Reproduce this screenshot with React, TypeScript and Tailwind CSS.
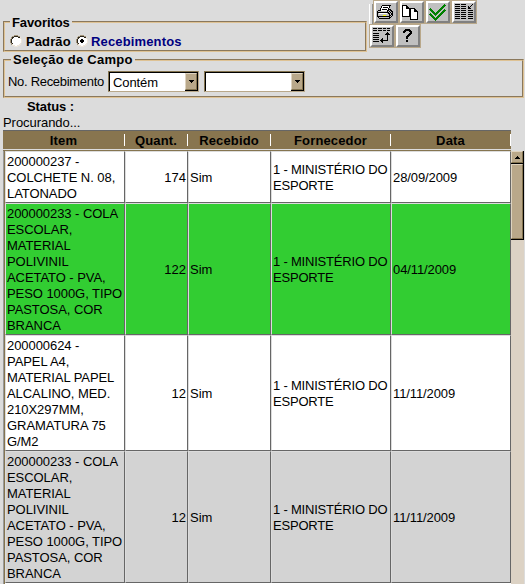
import React from "react";

const columns = [
  { label: "Item", width: "w-[122px]" },
  { label: "Quant.", width: "w-[63px]" },
  { label: "Recebido", width: "w-[83px]" },
  { label: "Fornecedor", width: "w-[120px]" },
  { label: "Data", width: "w-[120px]" },
];

const cola = ["200000233 - COLA", "ESCOLAR,", "MATERIAL", "POLIVINIL", "ACETATO - PVA,", "PESO 1000G, TIPO", "PASTOSA, COR", "BRANCA"];

const rows = [
  { item: ["200000237 -", "COLCHETE N. 08,", "LATONADO"], qty: "174", date: "28/09/2009", h: "h-[52px]", bg: "bg-white" },
  { item: cola, qty: "122", date: "04/11/2009", h: "h-[132px]", bg: "bg-[#32cd32]" },
  { item: ["200000624 -", "PAPEL A4,", "MATERIAL PAPEL", "ALCALINO, MED.", "210X297MM,", "GRAMATURA 75", "G/M2"], qty: "12", date: "11/11/2009", h: "h-[116px]", bg: "bg-white" },
  { item: cola, qty: "12", date: "11/11/2009", h: "h-[132px]", bg: "bg-[#d3d3d3]" },
];

const printer = [
  ".....#########..",
  "....#wwwwwww#...",
  "....#w#####w#...",
  "...#wwwwwww#....",
  "...#w#####w###..",
  ".###wwwwww##g##.",
  "#ggggggggg#g#g##",
  "############g#g#",
  "#gwwwwwwwwg##g##",
  "#ggggggggggg#g##",
  "#gggggyyyggg##g#",
  "#############g#.",
  ".#gggggggggg##..",
  "..###########...",
];

const question = [
  "..#####..",
  ".#######.",
  "###...###",
  "##.....##",
  "......###",
  ".....###.",
  "....###..",
  "...###...",
  "...##....",
  "...##....",
  ".........",
  "...##....",
  "...##....",
];

const radio = [
  "....dddd....",
  "..ddkkkkdd..",
  ".dkkwwwwkkl.",
  ".dkwwwwwwwl.",
  "dkwwwwwwwwwl",
  "dkwwwwwwwwwl",
  "dkwwwwwwwwwl",
  "dkwwwwwwwwwl",
  ".dkwwwwwwwl.",
  ".dlwwwwwwll.",
  "..lllwwlll..",
  "....llll....",
];

const palette: Record<string, string> = {
  "#": "#000",
  w: "#fff",
  g: "#c0c0c0",
  y: "#ffff00",
  d: "#a3957a",
  k: "#2a261e",
  l: "#eee6da",
};

function Pixels({ map, x = 0, y = 0 }: { map: string[]; x?: number; y?: number }) {
  return (
    <g>
      {map.flatMap((row, j) =>
        row.split("").map((c, i) => (c === "." ? null : <rect key={`${i}-${j}`} x={x + i} y={y + j} width="1" height="1" fill={palette[c]} />)),
      )}
    </g>
  );
}

function ToolButton({ label, children }: { label: string; children: React.ReactNode }) {
  return (
    <button aria-label={label} className="h-6 w-[26px] shrink-0 border border-[#b9a88a]">
      <span className="block h-full w-full border-2 border-t-white border-l-white border-r-[#808080] border-b-[#808080] bg-[#c0c0c0]">
        <svg width="20" height="18" viewBox="1 0 20 18" shapeRendering="crispEdges">
          {children}
        </svg>
      </span>
    </button>
  );
}

function ArrowBox({ down = false }: { down?: boolean }) {
  return (
    <span className={`flex w-[13px] shrink-0 border-r border-b border-black bg-[#b9a88a] ${down ? "" : "h-[13px]"}`}>
      <span className="flex flex-1 items-center justify-center border border-t-[#ded3c0] border-l-[#ded3c0] border-r-[#857550] border-b-[#857550]">
        <svg width="5" height="3" viewBox="0 0 5 3" shapeRendering="crispEdges">
          <path d={down ? "M0 0h5v1h-1v1h-1v1h-1v-1h-1v-1h-1z" : "M2 0h1v1h1v1h1v1h-5v-1h1v-1h1z"} />
        </svg>
      </span>
    </span>
  );
}

function Select({ value, className }: { value: string; className: string }) {
  return (
    <div className={`flex h-[21px] shrink-0 border border-t-[#857550] border-l-[#857550] border-r-[#b9a88a] border-b-[#b9a88a] ${className}`}>
      <div className="flex flex-1 border-t border-l border-black bg-white">
        <span className="flex-1 pl-[3px] leading-[20px] tracking-[-0.1px]">{value}</span>
        <ArrowBox down />
      </div>
    </div>
  );
}

function Radio({ checked = false }: { checked?: boolean }) {
  return (
    <svg width="12" height="12" viewBox="0 0 12 12" shapeRendering="crispEdges" className="mb-px shrink-0">
      <Pixels map={radio} />
      {checked && <path d="M5 4h2v1h1v2h-1v1h-2v-1h-1v-2h1z" />}
    </svg>
  );
}

const fieldset = "border-2 border-[#dec294] [border-style:groove]";

const cells =
  "[&>div]:flex [&>div]:items-center [&>div]:border [&>div]:pt-[2px] [&>div]:border-t-[#dcdcdc] [&>div]:border-l-[#dcdcdc] [&>div]:border-r-[#666] [&>div]:border-b-[#666]";

export default function App() {
  return (
    <div className="flex h-[584px] w-[525px] flex-col overflow-hidden bg-[#dcdcdc] font-['Liberation_Sans',Arial,sans-serif] text-[13px] leading-4 text-black">
      <div className="flex h-[52px] shrink-0">
        <fieldset className={`mt-[13px] ml-[3px] h-[39px] w-[364px] ${fieldset}`}>
          <legend className="ml-[5px] px-[2px] pt-[2px] font-bold leading-4 tracking-[-0.1px]">Favoritos</legend>
          <div className="flex items-center pl-[5px] font-bold">
            <Radio />
            <span className="ml-1 w-[50px] pt-px leading-5 tracking-[0.1px]">Padrão</span>
            <Radio checked />
            <span className="ml-[3px] pt-px tracking-[0.15px] text-[#000080]">Recebimentos</span>
          </div>
        </fieldset>
        <div className="w-[158px]">
          <div className="flex h-6 pl-[2px]">
            <span className="mt-1 h-[20px] w-[4px] shrink-0 border-r border-l border-l-white border-r-[#909090]" />
            <ToolButton label="Imprimir">
              <Pixels map={printer} x={2} y={2} />
            </ToolButton>
            <ToolButton label="Copiar">
              <path d="M1 2h5v1h1v1h1v1h1v9h-8zM9 5h5v1h1v1h1v1h1v9h-8z" />
              <path d="M2 3h3v3h3v7h-6zM10 6h3v3h3v7h-6z" fill="#fff" />
            </ToolButton>
            <ToolButton label="Confirmar">
              <path d="M3 6l5.5 5.5L18 2M3 11l5.5 5.5L18 7" fill="none" stroke="#008000" strokeWidth="1.6" />
            </ToolButton>
            <ToolButton label="Recolher">
              <path d="M2 1.5h5m1 0h5M2 3.5h5m1 0h5M2 5.5h5m1 0h5M2 7.5h5m1 0h5m2 0h5M2 9.5h5m1 0h5m2 0h5M2 11.5h5m1 0h5m2 0h5M2 13.5h5m1 0h5m2 0h5M2 15.5h5m1 0h5m2 0h5" stroke="#000" />
              <path d="M19 1h1v1h-1v1h-1v1h-1v1h1v1h-3v-3h1v1h1v-1h1v-1h1z" />
            </ToolButton>
          </div>
          <div className="flex pl-[2px]">
            <ToolButton label="Ordenar">
              <path d="M2 1.5h4m1 0h4m1 0h3m1 0h3M2 3.5h4m1 0h4m1 0h3m1 0h3M2 6.5h6M2 8.5h6M2 10.5h6M2 12.5h6M2 14.5h6" stroke="#000" />
              <path d="M16 5h1v1h1v1h1v1h-2v6h-5v2h-1v-1h-1v-1h-1v-1h1v-1h1v-1h1v2h4v-5h-2v-1h1v-1h1z" />
            </ToolButton>
            <ToolButton label="Ajuda">
              <Pixels map={question} x={6} y={2} />
            </ToolButton>
          </div>
        </div>
      </div>

      <fieldset className={`ml-[3px] h-[46px] w-[521px] shrink-0 ${fieldset}`}>
        <legend className="ml-[6px] px-[2px] font-bold leading-4 tracking-[0.25px]">Seleção de Campo</legend>
        <div className="flex pt-[3px] pl-[3px]">
          <span className="w-[100px] shrink-0 whitespace-nowrap pt-[3px] tracking-[-0.3px]">No. Recebimento</span>
          <Select value="Contém" className="w-[91px]" />
          <Select value="" className="ml-[5px] w-[101px]" />
        </div>
      </fieldset>

      <div className="h-8 shrink-0 pt-px pl-[3px]">
        <div className="pl-6 font-bold tracking-[-0.1px]">Status :</div>
        <div className="tracking-[-0.05px]">Procurando...</div>
      </div>

      <div className="ml-[3px] flex h-[21px] w-[508px] shrink-0 border-t border-b border-t-[#666] border-b-[#857550] bg-[#88754f]">
        {columns.map((c) => (
          <div key={c.label} className={`flex h-[19px] shrink-0 items-start border-b border-[#dcdcdc] ${c.width}`}>
            <span className="flex-1 text-center font-bold leading-[20px] tracking-[0.15px]">{c.label}</span>
            <span className="mt-[3px] h-3 w-px bg-white" />
          </div>
        ))}
      </div>

      <div className="ml-[3px] flex min-h-0 flex-1">
        <div className="w-[508px] shrink-0 border-l border-[#999]">
          <div className="border-l border-[#857550]">
            {rows.map((r, i) => (
              <div key={i} className={`flex ${r.h} ${r.bg} ${cells}`}>
                <div className="w-[120px] pl-px whitespace-nowrap tracking-[-0.06px]">
                  <span>
                    {r.item.map((line) => (
                      <span key={line} className="block">{line}</span>
                    ))}
                  </span>
                </div>
                <div className="w-[63px] justify-end pr-px">{r.qty}</div>
                <div className="w-[83px] pl-px">Sim</div>
                <div className="w-[120px] pl-px whitespace-nowrap tracking-[-0.2px]">
                  <span>1 - MINISTÉRIO DO<br />ESPORTE</span>
                </div>
                <div className="w-[120px] pl-px tracking-[-0.1px]">{r.date}</div>
              </div>
            ))}
            <div className="h-1 bg-white" />
          </div>
        </div>
        <div className="w-[13px] bg-[#dcd2c4]">
          <ArrowBox />
          <div className="h-[76px] border-r border-b border-black">
            <div className="h-full border border-t-[#ded3c0] border-l-[#ded3c0] border-r-[#857550] border-b-[#857550] bg-[#b9a88a]" />
          </div>
        </div>
      </div>
    </div>
  );
}
